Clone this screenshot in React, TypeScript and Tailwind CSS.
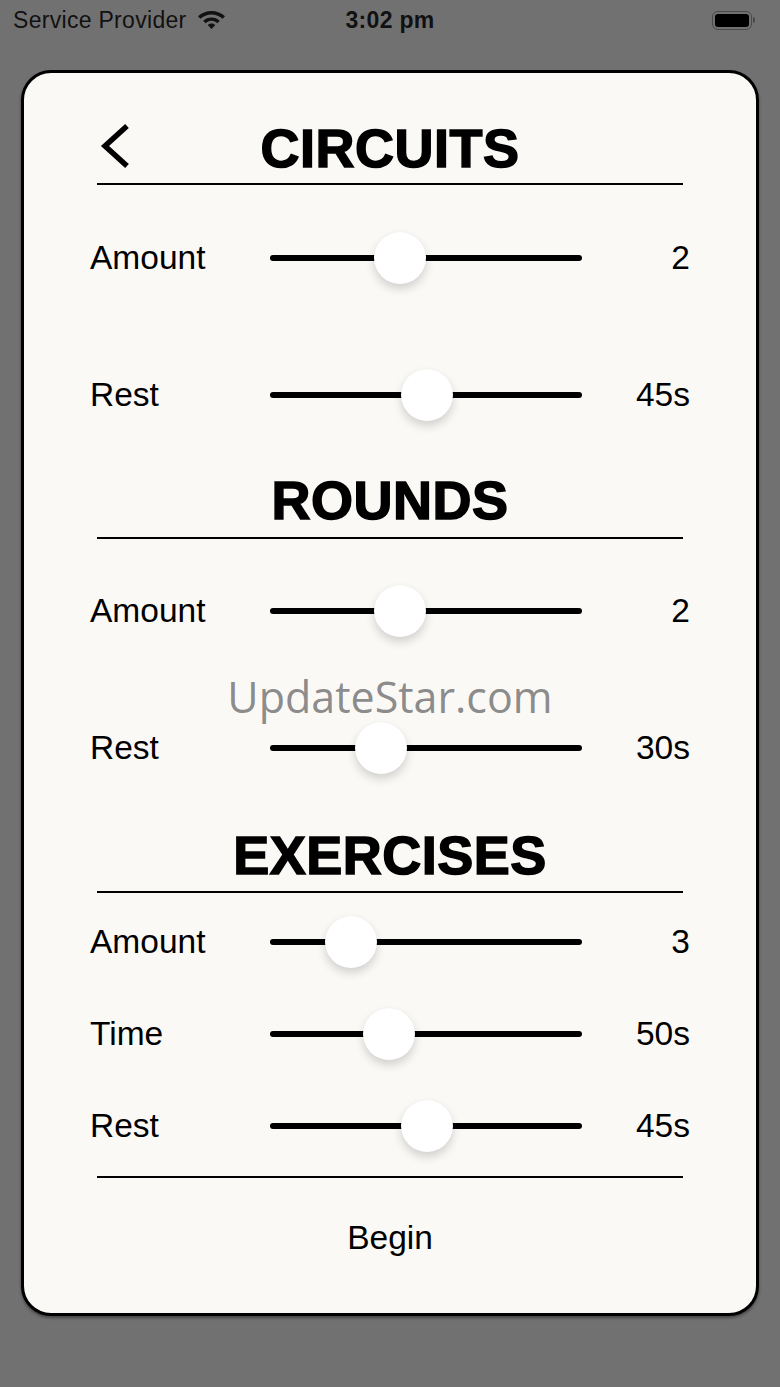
import { Fragment } from "react";

type Row = { label: string; value: string; thumb: number; mt: string };

const SliderRow = ({ label, value, thumb, mt }: Row) => {
  return (
    <div className={`flex h-[60px] items-center px-[66px] ${mt}`}>
      <span className="w-[180px] text-[33.5px] text-black">{label}</span>
      <div className="relative flex h-[60px] w-[312px] items-center">
        <div className="h-[6px] w-full rounded-full bg-black" />
        <div
          className="absolute top-[4px] h-[52px] w-[52px] rounded-full bg-white shadow-[0_5px_10px_rgba(0,0,0,0.16),0_0_1px_rgba(0,0,0,0.08)]"
          style={{ left: thumb - 26 }}
        />
      </div>
      <span className="flex-1 text-right text-[33.5px] text-black">{value}</span>
    </div>
  );
};

const Title = ({ text, mt, back }: { text: string; mt: string; back?: boolean }) => {
  return (
    <Fragment>
      <div className={`grid h-[60px] grid-cols-[1fr_auto_1fr] items-center px-[76px] ${mt}`}>
        <div className="-mt-[4px]">
          {back && (
            <svg width="32" height="46" viewBox="0 0 32 46" fill="none">
              <polyline
                points="27,3 5,23 27,43"
                stroke="black"
                strokeWidth="5.5"
                strokeLinecap="butt"
                strokeLinejoin="miter"
              />
            </svg>
          )}
        </div>
        <h1 className="text-[54px] font-bold leading-none tracking-[0.5px] text-black [-webkit-text-stroke:1.5px_black]">
          {text}
        </h1>
        <div />
      </div>
    </Fragment>
  );
};

const Line = ({ mt }: { mt: string }) => (
  <div className={`mx-[73px] h-[2px] bg-black ${mt}`} />
);

const App = () => {
  return (
    <div className="min-h-[1387px] w-full bg-[#717171] font-['Liberation_Sans',Arial,sans-serif]">
      <div className="relative flex h-[40px] items-center px-[13px] text-[#111]">
        <span className="text-[23px] tracking-[0.3px]">Service Provider</span>
        <svg className="ml-[10px] -mt-[2px]" width="29" height="21" viewBox="0 0 29 21">
          <path d="M14.5 2C9.3 2 4.6 4 1 7.3l2.4 2.5C6.4 7.1 10.3 5.4 14.5 5.4s8.1 1.7 11.1 4.4L28 7.3C24.4 4 19.7 2 14.5 2z" fill="#111" />
          <path d="M14.5 8.4c-3.2 0-6.1 1.2-8.3 3.3l2.4 2.5c1.6-1.5 3.6-2.4 5.9-2.4s4.3.9 5.9 2.4l2.4-2.5c-2.2-2.1-5.1-3.3-8.3-3.3z" fill="#111" />
          <path d="M14.5 14.6c-1.5 0-2.8.6-3.8 1.5l3.8 3.9 3.8-3.9c-1-.9-2.3-1.5-3.8-1.5z" fill="#111" />
        </svg>
        <span className="absolute left-1/2 -translate-x-1/2 text-[23px] font-bold tracking-[0.3px]">
          3:02 pm
        </span>
        <div className="ml-auto mr-[12px] flex items-center">
          <div className="flex h-[19px] w-[40px] items-center rounded-[6px] border-[1.5px] border-[#4a4a4a] p-[2px]">
            <div className="h-full w-full rounded-[3px] bg-black" />
          </div>
          <div className="ml-[1px] h-[6px] w-[2px] rounded-r-full bg-[#4a4a4a]" />
        </div>
      </div>

      <div className="relative mx-[21px] mt-[30px] h-[1246px] rounded-[30px] border-[3px] border-black bg-[#fbf9f6] shadow-[0_2px_3px_rgba(0,0,0,0.4)]">
        <Title text="CIRCUITS" mt="mt-[45px]" back />
        <Line mt="mt-[5px]" />
        <SliderRow label="Amount" value="2" thumb={130} mt="mt-[43px]" />
        <SliderRow label="Rest" value="45s" thumb={157} mt="mt-[77px]" />

        <Title text="ROUNDS" mt="mt-[45px]" />
        <Line mt="mt-[7px]" />
        <SliderRow label="Amount" value="2" thumb={130} mt="mt-[42px]" />
        <SliderRow label="Rest" value="30s" thumb={111} mt="mt-[77px]" />

        <Title text="EXERCISES" mt="mt-[47px]" />
        <Line mt="mt-[6px]" />
        <SliderRow label="Amount" value="3" thumb={81} mt="mt-[19px]" />
        <SliderRow label="Time" value="50s" thumb={119} mt="mt-[32px]" />
        <SliderRow label="Rest" value="45s" thumb={157} mt="mt-[32px]" />
        <Line mt="mt-[20px]" />

        <div className="mt-[30px] flex h-[60px] items-center justify-center">
          <button className="text-[33.5px] text-black">Begin</button>
        </div>

        <div className="pointer-events-none absolute left-0 right-0 top-[596px] text-center font-['Open_Sans',sans-serif] text-[43px] leading-[56px] text-[#7d7d7d]/90">
          UpdateStar.com
        </div>
      </div>
    </div>
  );
};

export default App;
